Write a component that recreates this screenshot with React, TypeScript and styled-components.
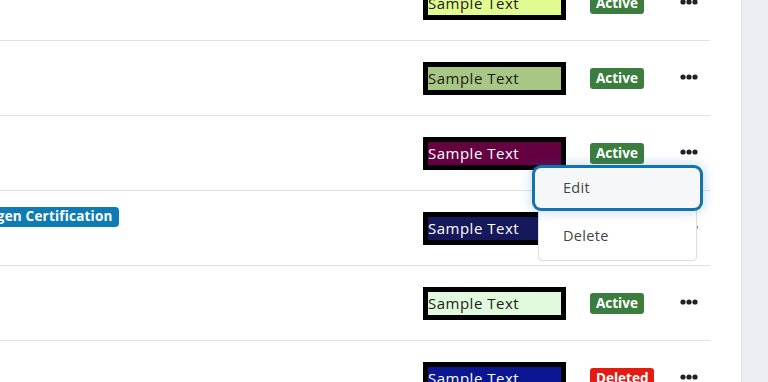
import styled, { createGlobalStyle } from "styled-components";

const GlobalStyle = createGlobalStyle`
  html, body {
    margin: 0;
    padding: 0;
    background: #ffffff;
    overflow: hidden;
  }
  body {
    font-family: "Open Sans", "Noto Sans", sans-serif;
  }
`;

type Row = {
  color: string;
  textColor: string;
  status: "Active" | "Deleted";
  tag?: string;
  menuOpen?: boolean;
};

const rows: Row[] = [
  { color: "#e2fb91", textColor: "#1b1b1b", status: "Active" },
  { color: "#a8c784", textColor: "#1b1b1b", status: "Active" },
  { color: "#650041", textColor: "#ffffff", status: "Active", menuOpen: true },
  { color: "#15185b", textColor: "#ffffff", status: "Active", tag: "Oxygen Certification" },
  { color: "#e1f9dd", textColor: "#1b1b1b", status: "Active" },
  { color: "#0b1693", textColor: "#ffffff", status: "Deleted" },
];

export default function App() {
  return (
    <>
      <GlobalStyle />
      <Page>
        <Main>
          <Table>
            {rows.map((row, i) => (
              <TableRow key={i}>
                <NameCell>{row.tag && <Tag>{row.tag}</Tag>}</NameCell>
                <SwatchCell>
                  <Swatch $bg={row.color} $fg={row.textColor}>
                    Sample Text
                  </Swatch>
                </SwatchCell>
                <StatusCell>
                  <StatusBadge $deleted={row.status === "Deleted"}>{row.status}</StatusBadge>
                </StatusCell>
                <ActionCell>
                  <MoreButton>
                    <svg width="18" height="6" viewBox="0 0 18 6">
                      <circle cx="3" cy="3" r="2.6" fill="#222" />
                      <circle cx="9" cy="3" r="2.6" fill="#222" />
                      <circle cx="15" cy="3" r="2.6" fill="#222" />
                    </svg>
                  </MoreButton>
                  {row.menuOpen && (
                    <Menu>
                      <MenuItem $focused>Edit</MenuItem>
                      <MenuItem>Delete</MenuItem>
                    </Menu>
                  )}
                </ActionCell>
              </TableRow>
            ))}
          </Table>
        </Main>
        <SidePanel />
      </Page>
    </>
  );
}

const Page = styled("div")`
  display: flex;
  width: 768px;
  height: 382px;
  overflow: hidden;
`;

const Main = styled("div")`
  width: 741px;
  background: #ffffff;
`;

const SidePanel = styled("div")`
  flex: 1;
  background: #eceef3;
  border-left: 1px solid #dfe2e8;
`;

const Table = styled("div")`
  width: 710px;
  margin-top: -34px;
`;

const TableRow = styled("div")`
  display: grid;
  grid-template-columns: 423px 167px 90px 1fr;
  align-items: center;
  height: 74px;
  border-bottom: 1px solid #e1e2e5;
`;

const NameCell = styled("div")`
  align-self: start;
  display: flex;
  padding-top: 16px;
  overflow: hidden;
`;

const Tag = styled("span")`
  flex-shrink: 0;
  margin-left: -36px;
  padding: 2px 6px 3px;
  background: #0f7bb5;
  color: #ffffff;
  font-size: 13.5px;
  font-weight: 700;
  letter-spacing: 0.2px;
  border-radius: 4px;
  line-height: 15px;
`;

const SwatchCell = styled("div")`
  display: flex;
`;

const Swatch = styled("div")<{ $bg: string; $fg: string }>`
  width: 133px;
  height: 23px;
  border: 5px solid #000000;
  background: ${(p) => p.$bg};
  color: ${(p) => p.$fg};
  font-size: 15px;
  letter-spacing: 0.5px;
  line-height: 22px;
  white-space: nowrap;
  overflow: hidden;
`;

const StatusCell = styled("div")`
  display: flex;
`;

const StatusBadge = styled("span")<{ $deleted?: boolean }>`
  display: inline-block;
  padding: 0 6px;
  height: 21px;
  line-height: 21px;
  border-radius: 3px;
  background: ${(p) => (p.$deleted ? "#e41b13" : "#3b7d3e")};
  color: #ffffff;
  font-size: 13.5px;
  font-weight: 700;
`;

const ActionCell = styled("div")`
  position: relative;
  display: flex;
`;

const MoreButton = styled("div")`
  display: flex;
  align-items: center;
  width: 18px;
  height: 10px;
  margin-top: -3px;
`;

const Menu = styled("div")`
  position: absolute;
  top: 17px;
  right: 13px;
  width: 157px;
  height: 92px;
  background: #ffffff;
  border: 1px solid #dcdde1;
  border-radius: 4px;
  display: flex;
  flex-direction: column;
  gap: 8px;
  z-index: 5;
`;

const MenuItem = styled("div")<{ $focused?: boolean }>`
  height: 40px;
  line-height: 40px;
  padding-left: ${(p) => (p.$focused ? "28px" : "24px")};
  margin: ${(p) => (p.$focused ? "0 -4px" : "0")};
  color: #444;
  font-size: 14.5px;
  letter-spacing: 0.3px;
  border-radius: 6px;
  background: ${(p) => (p.$focused ? "#f6f7f9" : "transparent")};
  box-shadow: ${(p) =>
    p.$focused ? "0 0 0 3px #1472ad, 0 0 12px 4px rgba(20, 114, 173, 0.25)" : "none"};
`;
